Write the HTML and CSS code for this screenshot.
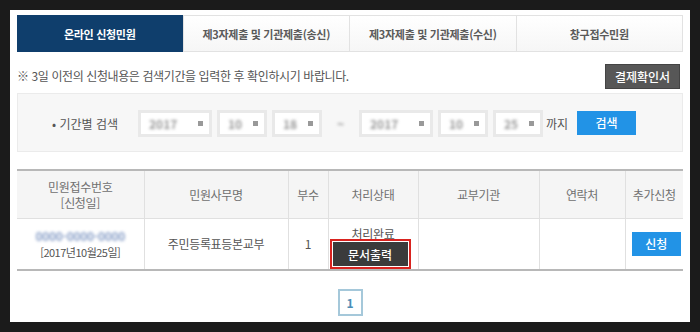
FILE: index.html
```html
<!DOCTYPE html>
<html lang="ko">
<head>
    <meta charset="UTF-8">
    <meta name="viewport" content="width=device-width, initial-scale=1.0">
    <title>신청민원 조회</title>
    <link rel="stylesheet" href="styles.css">
</head>
<body>
    <div class="frame">
        <ul class="tabs">
            <li class="active">온라인 신청민원</li>
            <li>제3자제출 및 기관제출(송신)</li>
            <li>제3자제출 및 기관제출(수신)</li>
            <li>창구접수민원</li>
        </ul>

        <div class="notice-row">
            <p class="notice">※ 3일 이전의 신청내용은 검색기간을 입력한 후 확인하시기 바랍니다.</p>
            <button class="btn-dark">결제확인서</button>
        </div>

        <div class="search-box">
            <span class="search-label">• 기간별 검색</span>
            <div class="date-group">
                <span class="date-box wide"><span class="blur">2017</span><i class="arrow"></i></span>
                <span class="date-box"><span class="blur">10</span><i class="arrow"></i></span>
                <span class="date-box"><span class="blur">18</span><i class="arrow"></i></span>
            </div>
            <span class="sep blur">~</span>
            <div class="date-group">
                <span class="date-box wide"><span class="blur">2017</span><i class="arrow"></i></span>
                <span class="date-box"><span class="blur">10</span><i class="arrow"></i></span>
                <span class="date-box"><span class="blur">25</span><i class="arrow"></i></span>
            </div>
            <span class="until">까지</span>
            <button class="btn-blue btn-search">검색</button>
        </div>

        <table class="list">
            <colgroup>
                <col style="width:127px">
                <col style="width:144px">
                <col style="width:40px">
                <col style="width:90px">
                <col style="width:121px">
                <col style="width:86px">
                <col style="width:58px">
            </colgroup>
            <thead>
                <tr>
                    <th>민원접수번호<br>[신청일]</th>
                    <th>민원사무명</th>
                    <th>부수</th>
                    <th>처리상태</th>
                    <th>교부기관</th>
                    <th>연락처</th>
                    <th>추가신청</th>
                </tr>
            </thead>
            <tbody>
                <tr>
                    <td><span class="blur num">0000-0000-0000</span><br><span class="date">[2017년10월25일]</span></td>
                    <td>주민등록표등본교부</td>
                    <td>1</td>
                    <td class="status">
                        <span class="status-text">처리완료</span>
                        <span class="mark"><button class="btn-print">문서출력</button></span>
                    </td>
                    <td></td>
                    <td></td>
                    <td><button class="btn-blue btn-apply">신청</button></td>
                </tr>
            </tbody>
        </table>

        <div class="paging">
            <a href="#" class="page">1</a>
        </div>
    </div>
</body>
</html>
```

FILE: styles.css
```css
/* Base */
body {
    margin: 0;
    background: #1b1b1b;
    font-family: 'Noto Sans CJK KR', 'Noto Sans', sans-serif;
    font-size: 12px;
    color: #555;
}

.frame {
    margin: 10px 10px 0 10px;
    height: 312px;
    background: #fff;
    padding: 5px 7px 0;
    box-sizing: border-box;
    overflow: hidden;
}

/* Tabs */
.tabs {
    display: flex;
    list-style: none;
    margin: 0;
    padding: 0;
    height: 37px;
    border: 1px solid #e2e2e2;
    box-sizing: border-box;
}

.tabs li {
    flex: 1;
    display: flex;
    align-items: center;
    justify-content: center;
    font-size: 11px;
    font-weight: bold;
    letter-spacing: -0.3px;
    color: #5a5a5a;
    background: linear-gradient(#fff, #f6f6f6);
    border-left: 1px solid #e2e2e2;
}

.tabs li:first-child {
    border-left: none;
}

.tabs li.active {
    background: #0f3e6c;
    color: #fff;
    margin: -1px 0 -1px -1px;
}

/* Notice */
.notice-row {
    display: flex;
    justify-content: space-between;
    align-items: center;
    margin-top: 12px;
    height: 25px;
}

.notice {
    margin: -2px 0 0;
    color: #555;
    letter-spacing: -0.4px;
}

.btn-dark {
    width: 75px;
    height: 25px;
    margin-right: 3px;
    border: 1px solid #444;
    background: #575757;
    color: #fff;
    font-family: inherit;
    font-size: 12px;
    font-weight: 500;
}

/* Search */
.search-box {
    display: flex;
    align-items: center;
    margin-top: 4px;
    height: 59px;
    padding: 2px 0 0 34px;
    background: #f7f7f7;
    border: 1px solid #ebebeb;
    box-sizing: border-box;
}

.search-label {
    width: 86px;
    color: #555;
}

.date-group {
    display: flex;
    gap: 5px;
}

.date-box {
    display: flex;
    justify-content: space-between;
    align-items: center;
    width: 50px;
    height: 27px;
    padding: 0 6px 0 8px;
    background: #fff;
    border: 3px solid #e9e9e9;
    box-sizing: border-box;
}

.date-box.wide {
    width: 74px;
}

.blur {
    filter: blur(1.4px);
    color: #999;
    font-weight: bold;
}

.arrow {
    width: 5px;
    height: 5px;
    background: #999;
    filter: blur(0.6px);
}

.sep {
    width: 37px;
    text-align: center;
}

.until {
    margin-left: 3px;
    color: #555;
}

.btn-blue {
    background: #2293e6;
    color: #fff;
    border: none;
    font-family: inherit;
    font-size: 12px;
    font-weight: 500;
}

.btn-search {
    width: 59px;
    height: 24px;
    margin-left: 9px;
    margin-top: -2px;
}

/* Table */
.list {
    width: 666px;
    margin-top: 17px;
    border-collapse: collapse;
    table-layout: fixed;
    border-top: 2px solid #b8b8b8;
    border-bottom: 2px solid #b8b8b8;
}

.list th,
.list td {
    border-left: 1px solid #e0e0e0;
    text-align: center;
    padding: 0;
    font-weight: normal;
    line-height: 16px;
    letter-spacing: -0.3px;
}

.list th:first-child,
.list td:first-child {
    border-left: none;
}

.list th {
    height: 47px;
    background: #f5f5f5;
    color: #707070;
    border-bottom: 1px solid #e0e0e0;
}

.list td {
    height: 50px;
    color: #555;
}

.num {
    color: #8aa0c8;
}

.date {
    font-size: 11px;
    letter-spacing: -0.5px;
}

.status {
    position: relative;
    vertical-align: top;
}

.status-text {
    display: block;
    margin-top: 7px;
}

.mark {
    position: absolute;
    left: 1px;
    top: 20px;
    padding: 1px;
    border: 2px solid #d9231f;
}

.btn-print {
    display: block;
    width: 75px;
    height: 24px;
    background: #3b3b3b;
    color: #fff;
    border: none;
    font-family: inherit;
    font-size: 12px;
    font-weight: 500;
}

.btn-apply {
    width: 49px;
    height: 24px;
    margin-left: 4px;
    margin-top: -1px;
}

/* Paging */
.paging {
    display: flex;
    justify-content: center;
    margin-top: 18px;
}

.page {
    display: flex;
    align-items: center;
    justify-content: center;
    width: 25px;
    height: 27px;
    border: 2px solid #a5c8da;
    box-sizing: border-box;
    color: #4c8db5;
    font-weight: bold;
    text-decoration: none;
}
```
